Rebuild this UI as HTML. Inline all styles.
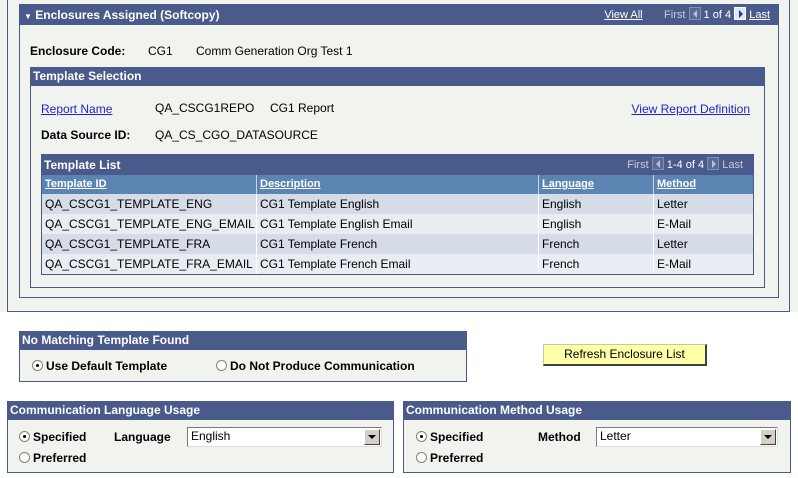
<!DOCTYPE html>
<html><head><style>
*{margin:0;padding:0;box-sizing:border-box}
body{width:798px;height:478px;background:#fff;position:relative;font-family:"Liberation Sans",Arial,sans-serif;font-size:12px;color:#000;overflow:hidden}
.a{position:absolute}
.box{position:absolute;border:1px solid #4a5a8a;background:#f1f3ef}
.hd{position:absolute;left:0;right:0;top:0;background:#4a5a8a;color:#fff;font-weight:bold;font-size:12px;padding-left:2px}
.b{font-weight:bold}
.lnk{color:#2222cc;text-decoration:underline}
.nav{color:#c8cce0;font-size:11px}
.arr{display:inline-block;width:12px;height:13px;border:1px solid #8090b0;background:#5a6a98;vertical-align:-2px;position:relative}
.arr.l:after{content:"";position:absolute;left:3px;top:2px;border-top:4px solid transparent;border-bottom:4px solid transparent;border-right:4px solid #b8c0d8}
.arr.r:after{content:"";position:absolute;left:4px;top:2px;border-top:4px solid transparent;border-bottom:4px solid transparent;border-left:4px solid #b8c0d8}
.arr.act{background:#dde4f4;border-color:#fff}
.arr.act:after{border-left-color:#2a3a6a}
.row{position:absolute;left:0;right:0;height:20px;line-height:20px}
.row div{position:absolute;top:0;height:20px;padding-left:3px;border-right:1px solid #fff}
.rad{display:inline-block;width:11px;height:11px;border-radius:50%;border:1px solid #808080;background:#fff;vertical-align:-1px;position:relative;margin-right:3px}
.rad.on:after{content:"";position:absolute;left:3px;top:3px;width:3px;height:3px;background:#000;border-radius:50%}
.sel{position:absolute;height:20px;border:1px solid #7a7a7a;border-right-color:#ddd;border-bottom-color:#ddd;background:#fff;line-height:17px;padding-left:3px;font-size:12px}
.sel .btn{position:absolute;right:1px;top:1px;width:16px;height:16px;background:#d4d0c8;border:1px solid #fff;border-right-color:#404040;border-bottom-color:#404040}
.sel .btn:after{content:"";position:absolute;left:3px;top:5px;border-left:4px solid transparent;border-right:4px solid transparent;border-top:4px solid #000}
</style></head><body>
<div class="a" style="left:0;top:0;width:798px;height:312px;background:#f1f3ef"></div>
<div class="a" style="left:7px;top:0;width:783px;height:312px;border:1px solid #4a5a8a;border-top:none"></div>

<div class="box" style="left:19px;top:4px;width:760px;height:294px">
 <div class="hd" style="height:20px;line-height:20px;padding-left:4px"><span style="font-size:8px">&#9660;</span> Enclosures Assigned (Softcopy)
  <span class="a" style="right:8px;top:0;font-weight:normal;font-size:11px"><span class="lnk" style="color:#fff">View All</span>&nbsp;&nbsp;&nbsp;&nbsp;&nbsp;&nbsp;&nbsp;<span class="nav">First</span> <span class="arr l"></span> 1 of 4 <span class="arr r act"></span> <span class="lnk" style="color:#fff">Last</span></span>
 </div>
 <div class="a b" style="left:10px;top:39px">Enclosure Code:</div>
 <div class="a" style="left:128px;top:39px">CG1</div>
 <div class="a" style="left:176px;top:39px">Comm Generation Org Test 1</div>
</div>

<div class="box" style="left:30px;top:67px;width:735px;height:221px">
 <div class="hd" style="height:18px;line-height:17px;padding-left:2px">Template Selection</div>
 <div class="a lnk" style="left:10px;top:34px">Report Name</div>
 <div class="a" style="left:124px;top:33px">QA_CSCG1REPO</div>
 <div class="a" style="left:239px;top:33px">CG1 Report</div>
 <div class="a lnk" style="right:14px;top:34px">View Report Definition</div>
 <div class="a b" style="left:10px;top:60px">Data Source ID:</div>
 <div class="a" style="left:124px;top:60px">QA_CS_CGO_DATASOURCE</div>
</div>

<div class="a" style="left:41px;top:154px;width:713px;height:121px;border:1px solid #4a5a8a;background:#fff">
 <div class="hd" style="height:20px;line-height:21px;padding-left:2px">Template List
  <span class="a" style="right:10px;top:0;font-weight:normal;font-size:11px"><span class="nav">First</span> <span class="arr l"></span> 1-4 of 4 <span class="arr r"></span> <span class="nav">Last</span></span>
 </div>
 <div class="row b" style="top:20px;height:19px;line-height:19px;background:#5b84b2;color:#fff;font-size:11px">
  <div style="left:0;width:215px;text-decoration:underline;border-right:1px solid #c8d4e4">Template ID</div>
  <div style="left:215px;width:282px;text-decoration:underline;border-right:1px solid #c8d4e4">Description</div>
  <div style="left:497px;width:115px;text-decoration:underline;border-right:1px solid #c8d4e4">Language</div>
  <div style="left:612px;width:99px;text-decoration:underline;border:none">Method</div>
 </div>
 <div class="row" style="top:39px;background:#d5dce8"><div style="left:0;width:215px">QA_CSCG1_TEMPLATE_ENG</div><div style="left:215px;width:282px">CG1 Template English</div><div style="left:497px;width:115px">English</div><div style="left:612px;width:99px;border:none">Letter</div></div>
 <div class="row" style="top:59px;background:#e9edf3"><div style="left:0;width:215px">QA_CSCG1_TEMPLATE_ENG_EMAIL</div><div style="left:215px;width:282px">CG1 Template English Email</div><div style="left:497px;width:115px">English</div><div style="left:612px;width:99px;border:none">E-Mail</div></div>
 <div class="row" style="top:79px;background:#d5dce8"><div style="left:0;width:215px">QA_CSCG1_TEMPLATE_FRA</div><div style="left:215px;width:282px">CG1 Template French</div><div style="left:497px;width:115px">French</div><div style="left:612px;width:99px;border:none">Letter</div></div>
 <div class="row" style="top:99px;background:#e9edf3"><div style="left:0;width:215px">QA_CSCG1_TEMPLATE_FRA_EMAIL</div><div style="left:215px;width:282px">CG1 Template French Email</div><div style="left:497px;width:115px">French</div><div style="left:612px;width:99px;border:none">E-Mail</div></div>
</div>

<div class="box" style="left:19px;top:331px;width:448px;height:51px">
 <div class="hd" style="height:18px;line-height:17px">No Matching Template Found</div>
 <div class="a b" style="left:12px;top:27px"><span class="rad on"></span>Use Default Template</div>
 <div class="a b" style="left:196px;top:27px"><span class="rad"></span>Do Not Produce Communication</div>
</div>

<div class="a" style="left:543px;top:344px;width:164px;height:22px;background:#ffffa8;border:1px solid #c8c8a0;border-right:2px solid #404040;border-bottom:2px solid #404040;text-align:center;line-height:19px">Refresh Enclosure List</div>

<div class="box" style="left:7px;top:401px;width:387px;height:72px">
 <div class="hd" style="height:18px;line-height:17px;padding-left:2px">Communication Language Usage</div>
 <div class="a b" style="left:11px;top:28px"><span class="rad on"></span>Specified</div>
 <div class="a b" style="left:106px;top:28px">Language</div>
 <div class="sel" style="left:179px;top:25px;width:195px">English<span class="btn"></span></div>
 <div class="a b" style="left:11px;top:49px"><span class="rad"></span>Preferred</div>
</div>

<div class="box" style="left:403px;top:401px;width:388px;height:72px">
 <div class="hd" style="height:18px;line-height:17px;padding-left:2px">Communication Method Usage</div>
 <div class="a b" style="left:12px;top:28px"><span class="rad on"></span>Specified</div>
 <div class="a b" style="left:134px;top:28px">Method</div>
 <div class="sel" style="left:192px;top:25px;width:182px">Letter<span class="btn"></span></div>
 <div class="a b" style="left:12px;top:49px"><span class="rad"></span>Preferred</div>
</div>
</body></html>
